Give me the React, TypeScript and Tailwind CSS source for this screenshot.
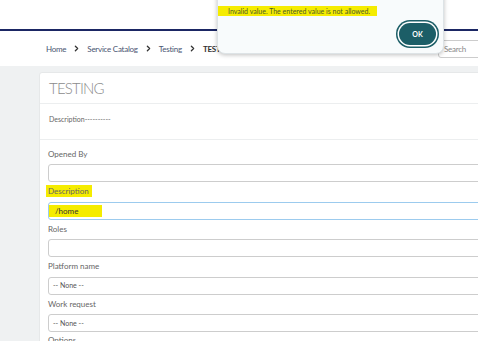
import { ChevronRight } from "lucide-react";

const FIELDS = [
  { label: "Opened By", value: "", kind: "input" },
  { label: "Description", value: "/home", kind: "focus" },
  { label: "Roles", value: "", kind: "input" },
  { label: "Platform name", value: "-- None --", kind: "select" },
  { label: "Work request", value: "-- None --", kind: "select" },
];

function Field({ label, value, kind }: { label: string; value: string; kind: string }) {
  const focused = kind === "focus";
  return (
    <div className="flex flex-col">
      <div className="h-[13px] flex items-center">
        <span
          className={`text-[8px] leading-none text-[#666] ${
            focused ? "bg-[#f5ec00] -ml-[2px] pl-[2px] pr-[3px] py-[2px]" : ""
          }`}
        >
          {label}
        </span>
      </div>
      <div
        className={`mt-[4px] h-[18px] w-[460px] rounded-[3px] bg-white flex items-center ${
          focused ? "border border-[#9ccbee]" : "border border-[#cdcdcd]"
        }`}
      >
        {kind === "focus" && (
          <span className="h-[12px] w-[53px] bg-[#f5ec00] flex items-center pl-[6px] text-[8px] text-[#333]">
            {value}
          </span>
        )}
        {kind === "select" && (
          <span className="pl-[4px] text-[7px] text-[#555]">{value}</span>
        )}
      </div>
    </div>
  );
}

export default function App() {
  return (
    <div className="relative w-[478px] h-[341px] overflow-hidden bg-[#eff1f2] font-['Lato',sans-serif]">
      {/* Header */}
      <div className="h-[29px] bg-white" />
      <div className="h-[2px] bg-[#1b2764]" />

      {/* Breadcrumb bar */}
      <div className="h-[35px] bg-white flex items-center pl-[46px] text-[8px] tracking-[-0.25px] text-[#4a5572]">
        <span>Home</span>
        <ChevronRight className="w-[9px] h-[9px] mx-[6px] text-[#333]" strokeWidth={3.5} />
        <span>Service Catalog</span>
        <ChevronRight className="w-[9px] h-[9px] mx-[6px] text-[#333]" strokeWidth={3.5} />
        <span>Testing</span>
        <ChevronRight className="w-[9px] h-[9px] mx-[6px] text-[#333]" strokeWidth={3.5} />
        <span className="font-bold text-[#333]">TESTING</span>
        <div className="ml-auto mr-[-10px] h-[18px] w-[50px] border border-[#ccc] rounded-[3px] flex items-center pl-[5px] text-[#888]">
          Search
        </div>
      </div>

      {/* Content */}
      <div className="pl-[39px] pt-[6px]">
        <div className="w-[460px] bg-white border border-[#e6e8e9] rounded-tl-[3px]">
          <div className="h-[31px] flex items-center px-[9px] border-b border-[#eceeef]">
            <span className="text-[15px] font-light tracking-[-0.8px] text-[#8b8b8b]">TESTING</span>
          </div>
          <div className="h-[36px] flex items-center px-[9px] border-b border-[#eceeef]">
            <span className="text-[7px] text-[#666] -mt-[4px]">Description----------</span>
          </div>
          <div className="flex flex-col gap-[2.5px] px-[8px] pt-[7px]">
            {FIELDS.map((f) => (
              <Field key={f.label} {...f} />
            ))}
            <span className="text-[8px] leading-[10px] text-[#666]">Options</span>
          </div>
        </div>
      </div>

      {/* Alert dialog */}
      <div className="absolute left-[217px] top-[-10px] w-[227px] h-[64px] bg-[#f8fbfc] rounded-b-[8px] shadow-[0_1px_4px_rgba(0,0,0,0.25)] border border-[#dde3e6]">
        <div className="mt-[15px] w-[159px] h-[10px] bg-[#f5ec00] flex items-center pl-[10px] text-[7px] text-[#4d5a2a]">
          Invalid value. The entered value is not allowed.
        </div>
        <div className="flex justify-end pr-[7px] mt-[7px]">
          <button className="h-[22px] w-[37px] rounded-full bg-[#1c5e67] text-white text-[7px] font-bold ring-[1.5px] ring-white shadow-[0_0_0_3px_#1c5e67]">
            OK
          </button>
        </div>
      </div>
    </div>
  );
}
